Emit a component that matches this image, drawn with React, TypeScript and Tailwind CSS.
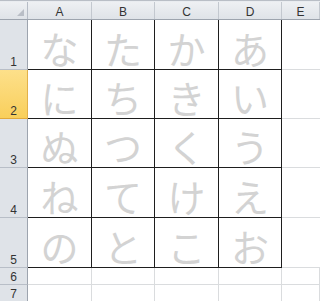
import React from "react";

const cols = ["A", "B", "C", "D", "E"];
const data = [
  ["な", "た", "か", "あ"],
  ["に", "ち", "き", "い"],
  ["ぬ", "つ", "く", "う"],
  ["ね", "て", "け", "え"],
  ["の", "と", "こ", "お"],
];
const rowHeights = ["h-[50px]", "h-[49px]", "h-[49px]", "h-[50px]", "h-[50px]"];

export default function App() {
  return (
    <div className="w-[320px] h-[301px] overflow-hidden bg-white font-['Liberation_Sans',sans-serif] text-[12px] text-[#333]">
      {/* top strip */}
      <div className="h-[2px] bg-[#b9bec6] border-b border-[#e9ecf0]" />
      {/* header row */}
      <div className="flex h-[18px] border-b border-[#9da4ae]">
        <div className="relative w-[28px] shrink-0 bg-gradient-to-b from-[#eef0f3] to-[#dfe3e8] border-r border-[#b6bcc6]">
          <div className="absolute right-[3px] bottom-[3px] w-0 h-0 border-l-[7px] border-l-transparent border-b-[7px] border-b-[#b9bec6]" />
        </div>
        {cols.map((c, i) => (
          <div
            key={c}
            className={`${i === 4 ? "flex-1" : i % 2 === 0 ? "w-[64px]" : "w-[63px]"} shrink-0 flex items-center justify-center bg-gradient-to-b from-[#eef0f3] to-[#dfe3e8] border-r border-[#c3c8cf] leading-none pt-[2px]`}
          >
            {c}
          </div>
        ))}
      </div>
      {data.map((row, r) => (
        <div key={r} className={`flex ${rowHeights[r]}`}>
          <div
            className={`w-[28px] shrink-0 flex items-end justify-center pb-[1px] leading-none border-r border-b ${
              r === 1
                ? "bg-gradient-to-b from-[#fde08a] to-[#f9cf5a] border-b-[#e2a93a] border-r-[#e2b14a]"
                : "bg-[#dfe3e8] border-b-[#b8bec7] border-r-[#9da4ae]"
            }`}
          >
            {r + 1}
          </div>
          {row.map((ch, c) => (
            <div
              key={c}
              className={`${c % 2 === 0 ? "w-[64px]" : "w-[63px]"} shrink-0 flex items-end justify-center border-r border-b border-[#1e1e1e] pb-[2px] font-['Noto_Sans_CJK_JP',sans-serif] text-[38px] leading-none text-[#d3d3d3]`}
            >
              {ch}
            </div>
          ))}
          <div className="flex-1 border-b border-[#dadcde]" />
        </div>
      ))}
      {[6, 7].map((n) => (
        <div key={n} className="flex h-[17px]">
          <div className="w-[28px] shrink-0 flex items-end justify-center leading-none bg-[#dfe3e8] border-r border-r-[#9da4ae] border-b border-b-[#b8bec7] pb-[1px]">
            {n}
          </div>
          {cols.map((c, i) => (
            <div
              key={c}
              className={`${i === 4 ? "flex-1" : i % 2 === 0 ? "w-[64px]" : "w-[63px]"} shrink-0 border-r border-b border-[#dadcde]`}
            />
          ))}
        </div>
      ))}
    </div>
  );
}
